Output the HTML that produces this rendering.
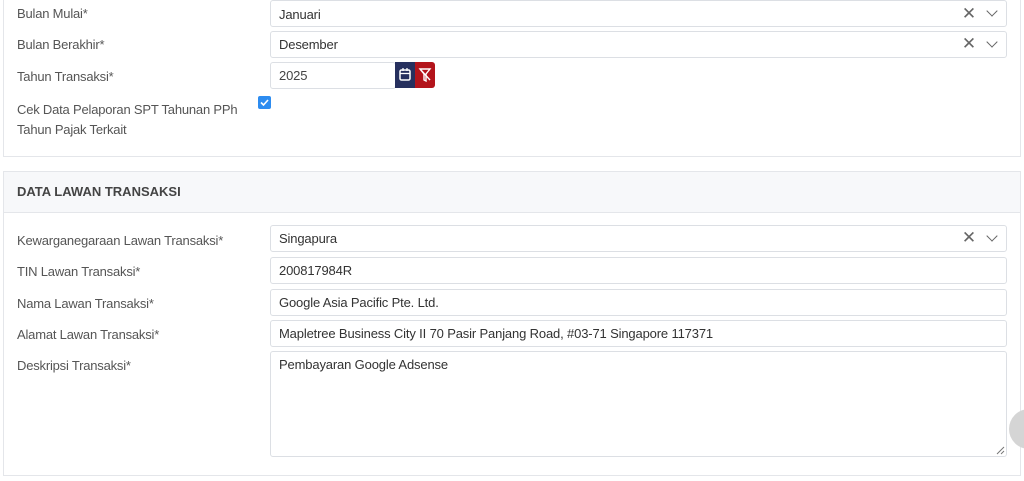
<!DOCTYPE html>
<html><head><style>
body{margin:0;width:1024px;height:481px;overflow:hidden;background:#fff;font-family:"Liberation Sans",sans-serif;font-size:13px;color:#555;position:relative}
.card{position:absolute;left:3px;width:1018px;border:1px solid #e4e6ea;box-sizing:border-box;background:#fff}
.lbl{position:absolute;left:17px;color:#555;font-size:13px;letter-spacing:-0.2px}
.inp{position:absolute;left:270px;width:737px;border:1px solid #dcdfe4;border-radius:3px;box-sizing:border-box;background:#fff;color:#333;padding-left:8px;line-height:25px;font-size:13px;letter-spacing:-0.15px}
.x{position:absolute;right:30px;top:-1px;color:#666;font-size:17px}
.v{position:absolute;right:10px;top:6px;width:7px;height:7px;border-right:1.5px solid #666;border-bottom:1.5px solid #666;transform:rotate(45deg)}
</style></head><body>
<div class="card" style="top:-5px;height:162px"></div>
<div class="card" style="top:171px;height:305px">
 <div style="height:40px;background:#f7f8fa;border-bottom:1px solid #e4e6ea;font-weight:bold;color:#444;line-height:40px;padding-left:13px;font-size:13px">DATA LAWAN TRANSAKSI</div>
</div>
<div class="lbl" style="top:6px">Bulan Mulai*</div>
<div class="inp" style="top:0;height:27px;line-height:27px">Januari<span class="x">✕</span><span class="v"></span></div>
<div class="lbl" style="top:37px">Bulan Berakhir*</div>
<div class="inp" style="top:31px;height:27px">Desember<span class="x">✕</span><span class="v"></span></div>
<div class="lbl" style="top:69px">Tahun Transaksi*</div>
<div class="inp" style="top:62px;width:126px;height:27px;color:#444">2025</div>
<div style="position:absolute;left:395px;top:62px;width:20px;height:26px;background:#26305e">
<svg width="20" height="26"><rect x="5" y="8" width="10" height="10" rx="1.5" fill="none" stroke="#fff" stroke-width="1.5"/><line x1="5" y1="11.5" x2="15" y2="11.5" stroke="#fff" stroke-width="1.3"/><line x1="8" y1="6" x2="8" y2="9" stroke="#fff" stroke-width="1.3"/><line x1="12" y1="6" x2="12" y2="9" stroke="#fff" stroke-width="1.3"/></svg></div>
<div style="position:absolute;left:415px;top:62px;width:20px;height:26px;background:#b3141b;border-radius:0 3px 3px 0">
<svg width="20" height="26"><path d="M5 7h10l-4 5v7l-2-1v-6z" fill="none" stroke="#fff" stroke-width="1.4"/><line x1="5" y1="7" x2="15" y2="18" stroke="#fff" stroke-width="1.4"/></svg></div>
<div class="lbl" style="top:100px;line-height:20px">Cek Data Pelaporan SPT Tahunan PPh<br>Tahun Pajak Terkait</div>
<div style="position:absolute;left:258px;top:96px;width:13px;height:13px;background:#2d8cf0;border-radius:2px"><svg width="13" height="13"><path d="M3 6.5l2.5 2.5 4.5-5" fill="none" stroke="#fff" stroke-width="1.6"/></svg></div>

<div class="lbl" style="top:233px">Kewarganegaraan Lawan Transaksi*</div>
<div class="inp" style="top:225px;height:27px">Singapura<span class="x">✕</span><span class="v"></span></div>
<div class="lbl" style="top:264px">TIN Lawan Transaksi*</div>
<div class="inp" style="top:257px;height:27px">200817984R</div>
<div class="lbl" style="top:296px">Nama Lawan Transaksi*</div>
<div class="inp" style="top:289px;height:27px">Google Asia Pacific Pte. Ltd.</div>
<div class="lbl" style="top:327px">Alamat Lawan Transaksi*</div>
<div class="inp" style="top:320px;height:27px">Mapletree Business City II 70 Pasir Panjang Road, #03-71 Singapore 117371</div>
<div class="lbl" style="top:358px">Deskripsi Transaksi*</div>
<div class="inp" style="top:351px;height:106px;line-height:26px">Pembayaran Google Adsense
<svg style="position:absolute;right:1px;bottom:1px" width="9" height="9"><path d="M8 1L1 8M8 5L5 8" stroke="#777" stroke-width="1"/></svg></div>
<div style="position:absolute;left:1009px;top:409px;width:40px;height:40px;border-radius:50%;background:#d5d5d5"></div>
</body></html>
